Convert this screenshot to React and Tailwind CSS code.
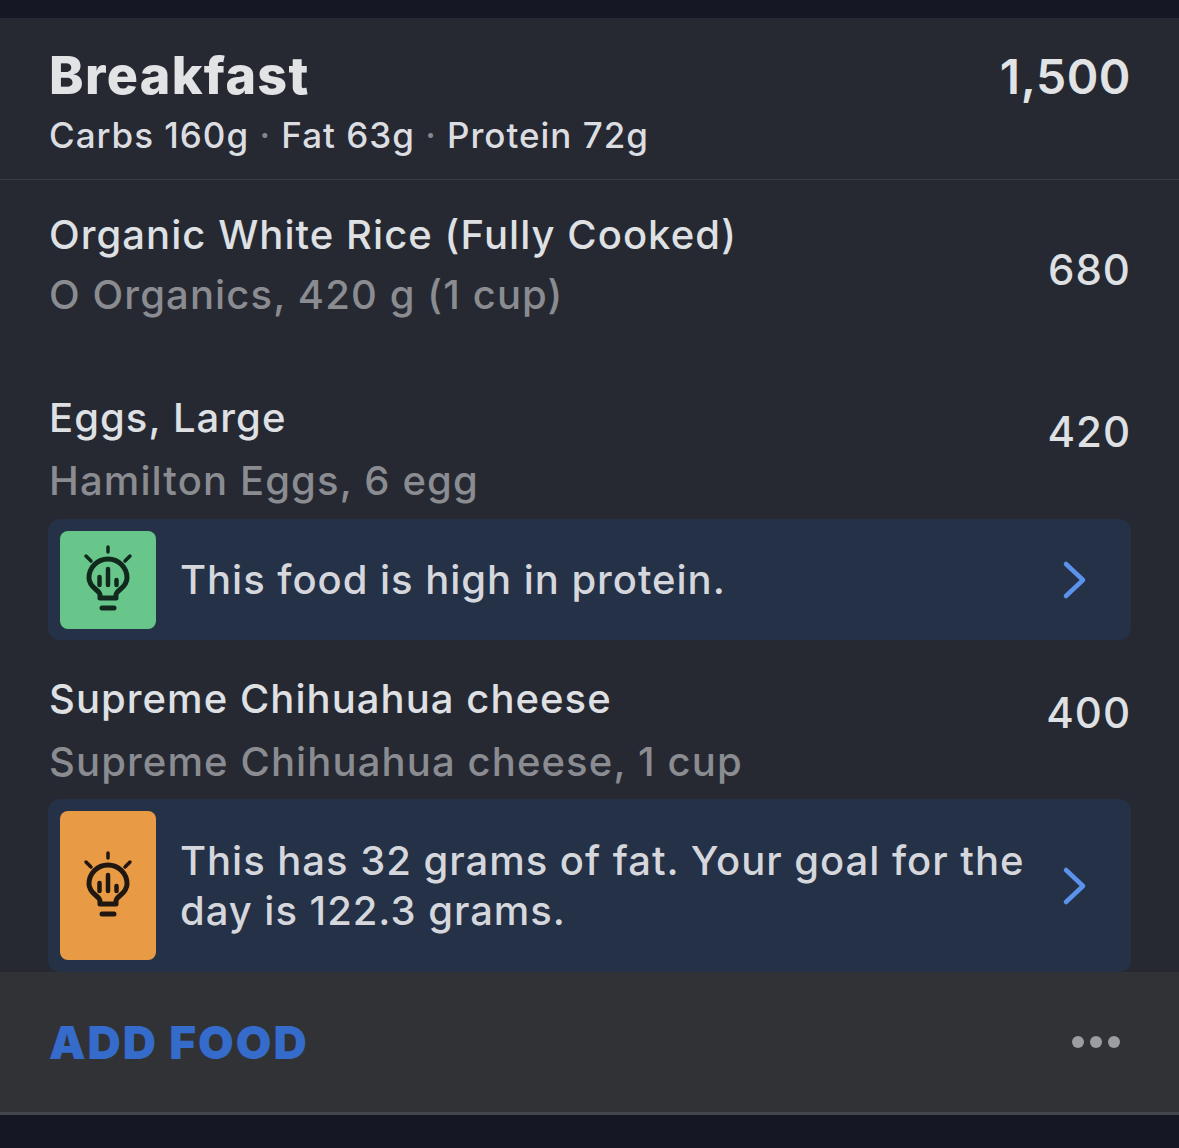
import React from 'react';

// Lightbulb with a small bar chart inside, used on the insight tiles
const BulbIcon = ({ color }) => (
  <svg width="52" height="72" viewBox="0 0 52 72" fill="none" stroke={color} strokeLinecap="round" strokeLinejoin="round">
    <path d="M26 3v5M4 12l5 5M48 12l-5 5" strokeWidth="3.5" />
    <path d="M18 54v-3c0-5-11-7-11-17a19 19 0 0 1 38 0c0 10-11 12-11 17v3z" strokeWidth="5" />
    <path d="M20 64h12" strokeWidth="5" />
    <path d="M26 25v16M17.5 33v8M34.5 36v5" strokeWidth="4.5" />
  </svg>
);

const Chevron = () => (
  <svg width="28" height="40" viewBox="0 0 28 40" fill="none" stroke="#5b93ec" strokeWidth="4.5" strokeLinecap="round" strokeLinejoin="round">
    <path d="M6 4l17 16L6 36" />
  </svg>
);

const Insight = ({ tile, iconColor, height, children }) => (
  <div className={`mx-[48px] flex items-stretch rounded-xl bg-[#243147] p-3 pr-0 ${height}`}>
    <div className={`flex w-[96px] shrink-0 items-center justify-center rounded-lg ${tile}`}>
      <BulbIcon color={iconColor} />
    </div>
    <div className="flex min-w-0 flex-1 items-center whitespace-nowrap pl-[24px] text-[40px] leading-[50px] font-medium tracking-[0.97px] text-[#d5d7dc]">{children}</div>
    <div className="flex w-[112px] shrink-0 items-center justify-center pr-[2px]">
      <Chevron />
    </div>
  </div>
);

const FoodRow = ({ name, detail, cal, className }) => (
  <div className={`flex items-start justify-between pl-[49px] pr-[48px] ${className}`}>
    <div>
      <div className="text-[40px] leading-[50px] font-medium tracking-[1.05px] text-[#dfe0e3]">{name}</div>
      <div className="mt-[13px] text-[40px] leading-[50px] font-medium tracking-[1.12px] text-[#8a8c91]">{detail}</div>
    </div>
    <div className="mt-[14px] text-[42px] leading-[50px] font-medium tracking-[1px] text-[#dfe0e3]">{cal}</div>
  </div>
);

export default function App() {
  return (
    <div className="flex h-[1148px] w-[1179px] flex-col overflow-hidden bg-[#151824] font-['Inter',sans-serif]">
      <div className="mt-[18px] flex h-[954px] flex-col bg-[#262932]">
        <div className="flex h-[162px] items-start justify-between border-b border-[#3a3c45] pl-[49px] pr-[48px]">
          <div>
            <div className="pt-[26px] text-[52px] leading-[64px] font-extrabold tracking-[1.35px] text-[#e2e3e5]">Breakfast</div>
            <div className="mt-[6px] text-[35px] leading-[42px] font-medium tracking-[0.98px] text-[#dcdde1]">
              Carbs 160g <span className="text-[#85878d]">·</span> Fat 63g <span className="text-[#85878d]">·</span> Protein 72g
            </div>
          </div>
          <div className="pt-[29px] text-[48px] leading-[60px] font-semibold tracking-[0.5px] text-[#e2e3e5]">1,500</div>
        </div>

        <div className="flex items-start justify-between pl-[49px] pr-[48px] pt-[30px]">
          <div>
            <div className="text-[40px] leading-[50px] font-medium tracking-[1.05px] text-[#dfe0e3]">Organic White Rice (Fully Cooked)</div>
            <div className="mt-[10px] text-[40px] leading-[50px] font-medium tracking-[1.12px] text-[#8a8c91]">O Organics, 420 g (1 cup)</div>
          </div>
          <div className="mt-[35px] text-[42px] leading-[50px] font-medium tracking-[1px] text-[#dfe0e3]">680</div>
        </div>

        <FoodRow className="mt-[73px]" name="Eggs, Large" detail="Hamilton Eggs, 6 egg" cal="420" />
        <div className="mt-[13px]">
          <Insight tile="bg-[#68c68a]" iconColor="#10291c" height="h-[121px] pb-[11px]">This food is high in protein.</Insight>
        </div>

        <FoodRow className="mt-[34px]" name="Supreme Chihuahua cheese" detail="Supreme Chihuahua cheese, 1 cup" cal="400" />
        <div className="mt-[12px]">
          <Insight tile="bg-[#e89a45]" iconColor="#1f1710" height="h-[173px]">
            <span>This has 32 grams of fat. Your goal for the<br />day is 122.3 grams.</span>
          </Insight>
        </div>
      </div>

      <div className="flex h-[143px] items-center justify-between border-b-[3px] border-[#44464d] bg-[#313236] pl-[49px] pr-[59px]">
        <div className="text-[46px] font-black tracking-[2px] text-[#356bcb]">ADD FOOD</div>
        <div className="flex gap-[6px]">
          <span className="size-3 rounded-full bg-[#9c9da1]"></span>
          <span className="size-3 rounded-full bg-[#9c9da1]"></span>
          <span className="size-3 rounded-full bg-[#9c9da1]"></span>
        </div>
      </div>
    </div>
  );
}
